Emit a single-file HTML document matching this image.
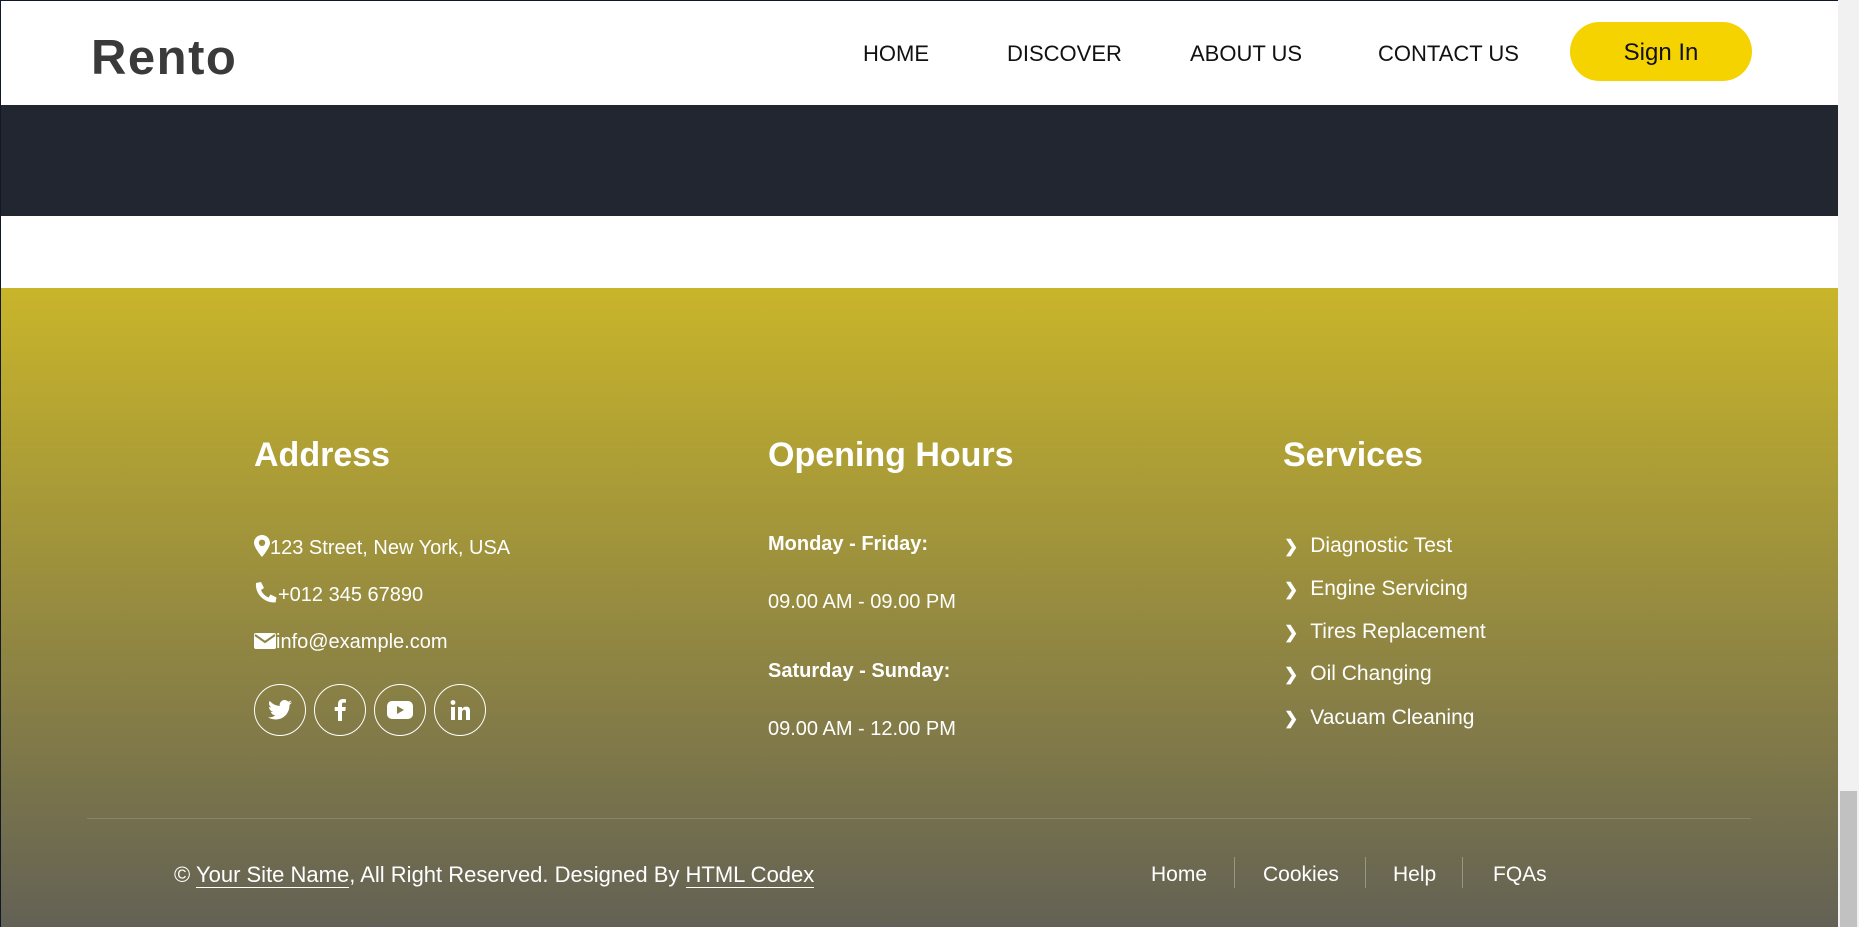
<!DOCTYPE html>
<html><head><meta charset="utf-8"><style>
*{margin:0;padding:0;box-sizing:border-box}
html,body{width:1859px;height:927px;overflow:hidden;background:#fff;font-family:"Liberation Sans",sans-serif}
.a{position:absolute;white-space:nowrap}
#top{position:absolute;left:0;top:0;width:1838px;height:105px;background:#fff;border-top:1px solid #111826;border-left:1px solid #111826}
#dark{position:absolute;left:0;top:105px;width:1838px;height:111px;background:#222630}
#foot{position:absolute;left:0;top:288px;width:1838px;height:639px;background:linear-gradient(#c9b52a,#636155)}
#lb{position:absolute;left:0;top:0;width:1px;height:927px;background:#111826}
#sb{position:absolute;left:1838px;top:0;width:21px;height:927px;background:#f1f1f1}
#th{position:absolute;left:1840px;top:791px;width:17px;height:136px;background:#c1c1c1}
.nav{font-size:22px;color:#111;top:41px}
h3{position:absolute;font-size:34px;font-weight:bold;color:#fff;top:436px}
.t{font-size:20px;color:#fff}
.s{font-size:21px;color:#fff}
.b{font-size:20px;font-weight:bold;color:#fff}
.c{position:absolute;width:52px;height:52px;border:1px solid #fff;border-radius:50%;top:684px;display:flex;align-items:center;justify-content:center}
.sep{position:absolute;top:857px;width:1px;height:31px;background:rgba(255,255,255,.3)}
u{text-decoration:none;border-bottom:1px solid #fff}
</style></head><body>
<div id="top"></div>
<div class="a" style="left:91px;top:30px;font-size:49px;font-weight:bold;color:#3a3a3a;letter-spacing:1.5px">Rento</div>
<div class="a nav" style="left:863px">HOME</div>
<div class="a nav" style="left:1007px">DISCOVER</div>
<div class="a nav" style="left:1190px">ABOUT US</div>
<div class="a nav" style="left:1378px">CONTACT US</div>
<div class="a" style="left:1570px;top:22px;width:182px;height:59px;border-radius:30px;background:#f5d300;font-size:24px;color:#111;text-align:center;line-height:62px">Sign In</div>
<div id="dark"></div>
<div id="foot"></div>
<div id="lb"></div>
<div id="sb"></div><div id="th"></div>

<h3 style="left:254px">Address</h3>
<h3 style="left:768px">Opening Hours</h3>
<h3 style="left:1283px">Services</h3>

<div class="a t" style="left:254px;top:535px"><svg width="16" height="22" viewBox="0 0 16 22" style="vertical-align:-3px"><path d="M8 0C3.6 0 0 3.4 0 7.8 0 13 8 22 8 22s8-9 8-14.2C16 3.4 12.4 0 8 0zm0 11a3.2 3.2 0 1 1 0-6.4A3.2 3.2 0 0 1 8 11z" fill="#fff"/></svg>123 Street, New York, USA</div>
<div class="a t" style="left:254px;top:582px"><svg width="24" height="22" viewBox="0 0 24 22" style="vertical-align:-3px"><path d="M2 1l5-1 3 6-3 2c1.5 3.5 4 6 7.5 7.5l2-3 6 3-1 5C10 21 1 12 2 1z" fill="#fff"/></svg>+012 345 67890</div>
<div class="a t" style="left:254px;top:631px"><svg width="22" height="18" viewBox="0 0 22 18" style="vertical-align:-2px"><rect x="0" y="1" width="22" height="16" rx="2" fill="#fff"/><path d="M1 3l10 7 10-7" stroke="#8b8540" stroke-width="2" fill="none"/></svg>info@example.com</div>

<div class="c" style="left:254px"><svg width="24" height="20" viewBox="0 0 24 20"><path d="M24 2.4a10 10 0 0 1-2.8.8A5 5 0 0 0 23.3.4a10 10 0 0 1-3.1 1.2A4.9 4.9 0 0 0 11.8 6 14 14 0 0 1 1.7.9a4.9 4.9 0 0 0 1.5 6.6 4.9 4.9 0 0 1-2.2-.6 4.9 4.9 0 0 0 3.9 4.8 4.9 4.9 0 0 1-2.2.1 4.9 4.9 0 0 0 4.6 3.4A9.9 9.9 0 0 1 0 17.3 14 14 0 0 0 7.5 19.5c9.1 0 14-7.5 14-14v-.6A10 10 0 0 0 24 2.4z" fill="#fff"/></svg></div>
<div class="c" style="left:314px"><svg width="12" height="22" viewBox="0 0 12 22"><path d="M8 22V12h3.3l.5-4H8V5.5C8 4.4 8.3 3.6 9.9 3.6H12V.2A27 27 0 0 0 9 0C6 0 4 1.8 4 5.2V8H.7v4H4v10z" fill="#fff"/></svg></div>
<div class="c" style="left:374px"><svg width="26" height="18" viewBox="0 0 26 18"><rect width="26" height="18" rx="5" fill="#fff"/><path d="M10 5v8l7-4z" fill="#857f48"/></svg></div>
<div class="c" style="left:434px"><svg width="20" height="20" viewBox="0 0 20 20"><rect x="1" y="7" width="4" height="13" fill="#fff"/><circle cx="3" cy="2.5" r="2.4" fill="#fff"/><path d="M8 7h4v2c.8-1.5 2.4-2.4 4.3-2.4 3 0 3.7 2 3.7 4.8V20h-4v-7.5c0-1.7-.4-2.7-1.8-2.7S12 11 12 12.6V20H8z" fill="#fff"/></svg></div>

<div class="a b" style="left:768px;top:533px">Monday - Friday:</div>
<div class="a t" style="left:768px;top:591px">09.00 AM - 09.00 PM</div>
<div class="a b" style="left:768px;top:660px">Saturday - Sunday:</div>
<div class="a t" style="left:768px;top:718px">09.00 AM - 12.00 PM</div>

<div class="a s" style="left:1284px;top:534px"><b style="font-size:17px;margin-right:12px">&#x276F;</b>Diagnostic Test</div>
<div class="a s" style="left:1284px;top:577px"><b style="font-size:17px;margin-right:12px">&#x276F;</b>Engine Servicing</div>
<div class="a s" style="left:1284px;top:620px"><b style="font-size:17px;margin-right:12px">&#x276F;</b>Tires Replacement</div>
<div class="a s" style="left:1284px;top:662px"><b style="font-size:17px;margin-right:12px">&#x276F;</b>Oil Changing</div>
<div class="a s" style="left:1284px;top:706px"><b style="font-size:17px;margin-right:12px">&#x276F;</b>Vacuam Cleaning</div>

<div class="a" style="left:87px;top:818px;width:1664px;height:1px;background:rgba(255,255,255,.15)"></div>

<div class="a" style="left:174px;top:862px;font-size:22px;color:#fff">© <u>Your Site Name</u>, All Right Reserved. Designed By <u>HTML Codex</u></div>
<div class="a s" style="left:1151px;top:863px">Home</div>
<div class="sep" style="left:1234px"></div>
<div class="a s" style="left:1263px;top:863px">Cookies</div>
<div class="sep" style="left:1365px"></div>
<div class="a s" style="left:1393px;top:863px">Help</div>
<div class="sep" style="left:1462px"></div>
<div class="a s" style="left:1493px;top:863px">FQAs</div>
</body></html>
